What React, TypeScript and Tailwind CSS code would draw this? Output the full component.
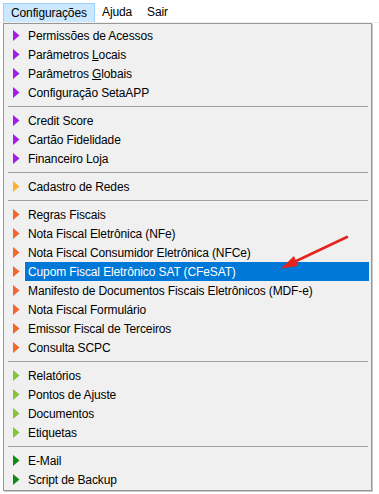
import React from "react";

type Item = { label: React.ReactNode; color: string; active?: boolean };
type Entry = Item | "sep";

const P = "#a21ee8";
const Y = "#f6b52c";
const O = "#f5652e";
const LG = "#86c23b";
const DG = "#138a13";

const entries: Entry[] = [
  { label: "Permissões de Acessos", color: P },
  { label: <>Parâmetros <span className="underline">L</span>ocais</>, color: P },
  { label: <>Parâmetros <span className="underline">G</span>lobais</>, color: P },
  { label: "Configuração SetaAPP", color: P },
  "sep",
  { label: "Credit Score", color: P },
  { label: "Cartão Fidelidade", color: P },
  { label: "Financeiro Loja", color: P },
  "sep",
  { label: "Cadastro de Redes", color: Y },
  "sep",
  { label: "Regras Fiscais", color: O },
  { label: "Nota Fiscal Eletrônica (NFe)", color: O },
  { label: "Nota Fiscal Consumidor Eletrônica (NFCe)", color: O },
  { label: "Cupom Fiscal Eletrônico SAT (CFeSAT)", color: O, active: true },
  { label: "Manifesto de Documentos Fiscais Eletrônicos (MDF-e)", color: O },
  { label: "Nota Fiscal Formulário", color: O },
  { label: "Emissor Fiscal de Terceiros", color: O },
  { label: "Consulta SCPC", color: O },
  "sep",
  { label: "Relatórios", color: LG },
  { label: "Pontos de Ajuste", color: LG },
  { label: "Documentos", color: LG },
  { label: "Etiquetas", color: LG },
  "sep",
  { label: "E-Mail", color: DG },
  { label: "Script de Backup", color: DG },
];

function Tri({ color }: { color: string }) {
  return (
    <svg width="7" height="11" viewBox="0 0 7 11" className="block">
      <polygon points="0,0 6.5,5.5 0,11" fill={color} />
    </svg>
  );
}

export default function App() {
  return (
    <div
      className="relative w-[379px] h-[494px] bg-white text-[12px] tracking-[-0.12px] text-black overflow-hidden"
      style={{ fontFamily: '"Liberation Sans", Arial, sans-serif' }}
    >
      {/* menu bar */}
      <div className="flex h-[22px] pt-[3px] pl-[3px] bg-white">
        <div className="w-[92px] h-[19px] bg-[#cce8ff] border border-[#99d1ff] border-b-0 pl-[7px] leading-[18px]">
          Configurações
        </div>
        <div className="w-[45px] h-[19px] pl-[7px] leading-[18px]">Ajuda</div>
        <div className="h-[19px] pl-[7px] leading-[18px]">Sair</div>
      </div>
      <div className="h-[1px] bg-[#f0f0f0]" />

      {/* dropdown */}
      <div className="ml-[3px] w-[369px] bg-[#f0f0f0] border border-[#979797] pt-[2px] pb-[1px] shadow-[1px_1px_0_#c8c8c8]">
        {entries.map((e, i) =>
          e === "sep" ? (
            <div key={i} className="h-[9px] pt-[4px] pl-[4px] pr-[3px]">
              <div className="h-[1px] bg-[#a0a0a0]" />
            </div>
          ) : (
            <div key={i} className="flex h-[19px] items-center">
              <div className="w-[20px] h-full flex items-center pl-[9px]">
                <Tri color={e.color} />
              </div>
              <div
                className={
                  "flex-1 h-full flex items-center pl-[4px] mr-[2px] " +
                  (e.active ? "bg-[#0078d7] text-white border-l border-[#f8f8f8]" : "")
                }
              >
                <span className={e.active ? "-ml-[1px]" : ""}>{e.label}</span>
              </div>
            </div>
          )
        )}
      </div>

      {/* red annotation arrow */}
      <svg className="absolute left-0 top-0 pointer-events-none" width="379" height="494">
        <line x1="347" y1="237" x2="292" y2="263" stroke="#e5231d" strokeWidth="2.5" strokeLinecap="round" />
        <polygon points="281,268.5 294,256 298,266" fill="#e5231d" />
      </svg>
    </div>
  );
}
